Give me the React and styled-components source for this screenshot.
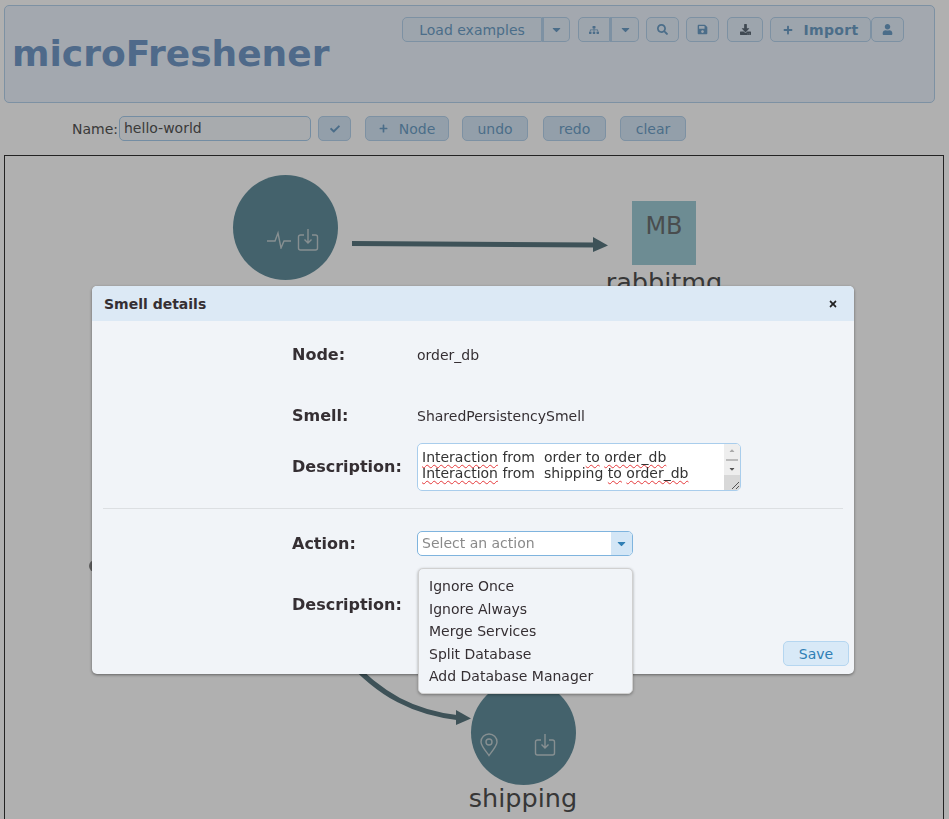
import React from "react";
import styled, { createGlobalStyle } from "styled-components";
import { FaCaretDown, FaSitemap, FaSearch, FaSave, FaDownload, FaPlus, FaUser, FaCheck, FaTimes } from "react-icons/fa";

const Global = createGlobalStyle`
  html, body { margin: 0; padding: 0; height: 100%; overflow: hidden; background: #fff; }
  body { font-family: "DejaVu Sans", sans-serif; color: #333; }
  * { box-sizing: border-box; }
`;

const Page = styled.div`
  width: 949px;
  height: 819px;
  padding: 5px 5px 0 4px;
  overflow: hidden;
`;

const Header = styled.header`
  height: 98px;
  width: 931px;
  background: #ecf4fe;
  border: 1px solid #b5d2ec;
  border-radius: 5px;
  position: relative;
  display: flex;
  align-items: flex-start;
  justify-content: flex-end;
  padding: 11px 30px 0 0;
`;

const Title = styled.h1`
  position: absolute;
  left: 7px;
  top: 27px;
  margin: 0;
  font-size: 36px;
  line-height: 42px;
  font-weight: 700;
  color: #739ac8;
`;

const Toolbar = styled.div`
  display: flex;
`;

const Btn = styled.button`
  height: 25px;
  width: ${(p) => p.$w}px;
  margin-left: ${(p) => p.$gap || 0}px;
  border: 1px solid #b5d2ec;
  border-radius: ${(p) => (p.$side === "l" ? "5px 0 0 5px" : p.$side === "r" ? "0 5px 5px 0" : "5px")};
  border-left-width: ${(p) => (p.$side === "r" ? 2 : 1)}px;
  background: ${(p) => (p.$fill ? "#d6e7f6" : "#e4effb")};
  color: #6d9fc7;
  font-family: inherit;
  font-size: 14px;
  font-weight: ${(p) => (p.$bold ? 700 : 400)};
  letter-spacing: ${(p) => (p.$bold ? "0.3px" : "0")};
  display: flex;
  align-items: center;
  justify-content: center;
  gap: ${(p) => p.$iconGap || 0}px;
  padding: 0;
  svg { font-size: ${(p) => p.$icon || 11}px; flex: none; }
`;

const DarkIcon = styled.span`
  display: flex;
  color: #5d6b78;
`;

const NameRow = styled.div`
  height: 25px;
  margin: 13px 0 14px;
  padding-left: 68px;
  display: flex;
  align-items: center;
`;

const NameLabel = styled.label`
  font-size: 14px;
  width: 47px;
  color: #555;
`;

const NameInput = styled.div`
  width: 192px;
  height: 25px;
  border: 1px solid #a9cdec;
  border-radius: 5px;
  background: #f4f8fc;
  font-size: 14px;
  line-height: 23px;
  padding-left: 4px;
  color: #555;
`;

const Canvas = styled.section`
  position: relative;
  width: 940px;
  height: 700px;
  border: 1px solid #333;
  background: #fff;
`;

const Service = styled.div`
  position: absolute;
  left: ${(p) => p.$x - 5}px;
  top: ${(p) => p.$y - 158}px;
  width: 105px;
  height: 105px;
  border-radius: 50%;
  background: #638f9d;
`;

const Broker = styled.div`
  position: absolute;
  left: 627px;
  top: 45px;
  width: 64px;
  height: 64px;
  background: #9fcbd5;
  color: #6b7072;
  font-size: 24px;
  text-align: center;
  line-height: 50px;
`;

const NodeLabel = styled.div`
  position: absolute;
  left: ${(p) => p.$x - 105}px;
  top: ${(p) => p.$y - 158}px;
  width: 210px;
  text-align: center;
  font-size: 25.5px;
  line-height: 30px;
  color: #505050;
`;

const NodeIcon = styled.svg`
  position: absolute;
  left: ${(p) => p.$x}px;
  top: ${(p) => p.$y}px;
  fill: none;
  stroke: #c4d0d3;
  stroke-width: 1.4;
`;

const Links = styled.svg`
  position: absolute;
  left: 0;
  top: 0;
  width: 940px;
  height: 700px;
  pointer-events: none;
`;

const HiddenNode = styled.div`
  position: absolute;
  left: 84px;
  top: 404px;
  width: 12px;
  height: 12px;
  border-radius: 50%;
  background: #888;
`;

const Overlay = styled.div`
  position: fixed;
  inset: 0;
  background: rgba(0, 0, 0, 0.31);
`;

const Modal = styled.div`
  position: absolute;
  left: 92px;
  top: 286px;
  width: 762px;
  height: 388px;
  background: #f1f4f8;
  border-radius: 5px;
  box-shadow: 0 1px 3px rgba(0, 0, 0, 0.45);
  color: #352f33;
`;

const ModalHead = styled.div`
  height: 35px;
  background: #dce9f5;
  border-radius: 5px 5px 0 0;
  padding: 0 16px 0 12px;
  display: flex;
  align-items: center;
  justify-content: space-between;
  font-size: 14px;
  font-weight: 700;
  svg { font-size: 10px; color: #222; }
`;

const ModalBody = styled.div`
  padding: 0 11px;
`;

const Row = styled.div`
  height: ${(p) => p.$h}px;
  padding-left: 189px;
  display: flex;
  align-items: ${(p) => p.$top ? "flex-start" : "center"};
`;

const Label = styled.div`
  width: 125px;
  flex: none;
  font-size: 16px;
  font-weight: 700;
  padding-top: ${(p) => p.$pt || 0}px;
`;

const Value = styled.div`
  font-size: 14px;
`;

const TextArea = styled.div`
  position: relative;
  width: 324px;
  height: 48px;
  border: 1px solid #a9cdec;
  border-radius: 5px;
  background: #fff;
  padding: 5px 4px;
  font-size: 14px;
  line-height: 16px;
  color: #333;
  overflow: hidden;
  white-space: pre;
`;

const Squiggle = styled.span`
  text-decoration: underline wavy #e5393b 1px;
  text-underline-offset: 2px;
  text-decoration-skip-ink: none;
`;

const ScrollBar = styled.div`
  position: absolute;
  right: 0;
  top: 0;
  bottom: 0;
  width: 16px;
  background: #eee;
  display: flex;
  flex-direction: column;
  align-items: center;
  svg { font-size: 8px; color: #555; }
`;

const ScrollUp = styled(FaCaretDown)`
  transform: rotate(180deg);
  margin-top: 3px;
  color: #aaa !important;
`;

const Thumb = styled.div`
  width: 12px;
  height: 2px;
  background: #bbb;
  margin: 4px 0 4px;
`;

const Grip = styled.div`
  margin-top: auto;
  width: 16px;
  height: 15px;
  background: #d8d8d8;
  display: flex;
  align-items: flex-end;
  justify-content: flex-end;
`;

const Divider = styled.hr`
  margin: 0;
  border: 0;
  border-top: 1px solid #dcdfe2;
`;

const Select = styled.div`
  width: 216px;
  height: 25px;
  border: 1px solid #7fb4de;
  border-radius: 5px;
  background: #fff;
  display: flex;
  overflow: hidden;
  font-size: 14px;
  color: #8a8a8a;
`;

const SelectText = styled.div`
  flex: 1;
  padding-left: 4px;
  line-height: 23px;
`;

const SelectArrow = styled.div`
  width: 21px;
  background: #d3e6f6;
  color: #2f7fb5;
  display: flex;
  align-items: center;
  justify-content: center;
  svg { font-size: 13px; }
`;

const Menu = styled.ul`
  position: absolute;
  left: 326px;
  top: 282px;
  width: 215px;
  height: 126px;
  margin: 0;
  padding: 6px 10px;
  list-style: none;
  background: #f1f4f8;
  border: 1px solid #d0d0d0;
  border-radius: 5px;
  box-shadow: 0 1px 3px rgba(0, 0, 0, 0.35);
  font-size: 14px;
  line-height: 22.5px;
  color: #352f33;
`;

const Save = styled.button`
  position: absolute;
  right: 5px;
  bottom: 8px;
  width: 66px;
  height: 25px;
  border: 1px solid #b5d6f0;
  border-radius: 5px;
  background: #d8e9f7;
  color: #2f7fb5;
  font-family: inherit;
  font-size: 14px;
  padding: 0;
`;

function InboxIcon({ x, y }) {
  return (
    <NodeIcon $x={x} $y={y} width="22" height="24" viewBox="0 0 22 24">
      <path d="M7 7H3.5a2 2 0 0 0-2 2v11a2 2 0 0 0 2 2h15a2 2 0 0 0 2-2V9a2 2 0 0 0-2-2H15" />
      <path d="M11 1v14M7.5 11.5 11 15l3.5-3.5" />
    </NodeIcon>
  );
}

export default function App() {
  return (
    <>
      <Global />
      <Page>
        <Header>
          <Title>microFreshener</Title>
          <Toolbar>
            <Btn $w={140} $side="l">Load examples</Btn>
            <Btn $w={28} $side="r" $icon={13}><FaCaretDown /></Btn>
            <Btn $w={32} $gap={8} $side="l" $icon={10}><FaSitemap /></Btn>
            <Btn $w={29} $side="r" $icon={13}><FaCaretDown /></Btn>
            <Btn $w={33} $gap={7}><FaSearch /></Btn>
            <Btn $w={33} $gap={7}><FaSave /></Btn>
            <Btn $w={36} $gap={8}><DarkIcon><FaDownload /></DarkIcon></Btn>
            <Btn $w={101} $gap={7} $bold $iconGap={11} $icon={10}><FaPlus />Import</Btn>
            <Btn $w={33}><FaUser /></Btn>
          </Toolbar>
        </Header>
        <NameRow>
          <NameLabel>Name:</NameLabel>
          <NameInput>hello-world</NameInput>
          <Btn $w={33} $gap={7} $fill $icon={10}><FaCheck /></Btn>
          <Btn $w={84} $gap={14} $fill $iconGap={11} $icon={9}><FaPlus />Node</Btn>
          <Btn $w={66} $gap={13} $fill>undo</Btn>
          <Btn $w={63} $gap={15} $fill>redo</Btn>
          <Btn $w={66} $gap={14} $fill>clear</Btn>
        </NameRow>
        <Canvas>
          <Service $x={233} $y={177 + 0} />
          <NodeLabel $x={280} $y={283}>order</NodeLabel>
          <Broker>MB</Broker>
          <NodeLabel $x={659} $y={269}>rabbitmq</NodeLabel>
          <NodeIcon $x={262} $y={73} width="25" height="20" viewBox="0 0 25 20">
            <path d="M0 12h8l3-8 3 15 3-7h7" />
          </NodeIcon>
          <InboxIcon x={292} y={72} />
          <Service $x={471} $y={682} />
          <NodeLabel $x={518} $y={785}>shipping</NodeLabel>
          <NodeIcon $x={474} $y={577} width="20" height="24" viewBox="0 0 20 24">
            <path d="M10 22.5C5 16 2 12.5 2 9a8 8 0 0 1 16 0c0 3.500-3 7-8 13.500Z" />
            <circle cx="10" cy="9" r="3" />
          </NodeIcon>
          <InboxIcon x={529} y={577} />
          <HiddenNode />
          <Links viewBox="0 0 940 700">
            <path d="M347 87.500 590 89" stroke="#5a7880" strokeWidth="5" fill="none" />
            <path d="M588 81 603 89.500 588 96Z" fill="#5a7880" />
            <path d="M340 500C375 540 410 557 455 562" stroke="#5a7880" strokeWidth="5" fill="none" />
            <path d="M451 554 466 562.500 451 569Z" fill="#5a7880" />
          </Links>
        </Canvas>
      </Page>
      <Overlay />
      <Modal>
        <ModalHead>Smell details<FaTimes /></ModalHead>
        <ModalBody>
          <Row $h={67}><Label>Node:</Label><Value>order_db</Value></Row>
          <Row $h={55}><Label>Smell:</Label><Value>SharedPersistencySmell</Value></Row>
          <Row $h={65} $top>
            <Label $pt={14}>Description:</Label>
            <TextArea>
              <Squiggle>Interaction</Squiggle> from  order <Squiggle>to</Squiggle> <Squiggle>order_db</Squiggle>{"\n"}
              <Squiggle>Interaction</Squiggle> from  shipping <Squiggle>to</Squiggle> <Squiggle>order_db</Squiggle>
              <ScrollBar>
                <ScrollUp />
                <Thumb />
                <FaCaretDown />
                <Grip>
                  <svg width="9" height="9" viewBox="0 0 9 9"><path d="M1 8 8 1M5 8l3-3" stroke="#555" strokeWidth="1" fill="none" /></svg>
                </Grip>
              </ScrollBar>
            </TextArea>
          </Row>
          <Divider />
          <Row $h={69}>
            <Label>Action:</Label>
            <Select>
              <SelectText>Select an action</SelectText>
              <SelectArrow><FaCaretDown /></SelectArrow>
            </Select>
          </Row>
          <Row $h={52}><Label>Description:</Label></Row>
        </ModalBody>
        <Menu>
          <li>Ignore Once</li>
          <li>Ignore Always</li>
          <li>Merge Services</li>
          <li>Split Database</li>
          <li>Add Database Manager</li>
        </Menu>
        <Save>Save</Save>
      </Modal>
    </>
  );
}
